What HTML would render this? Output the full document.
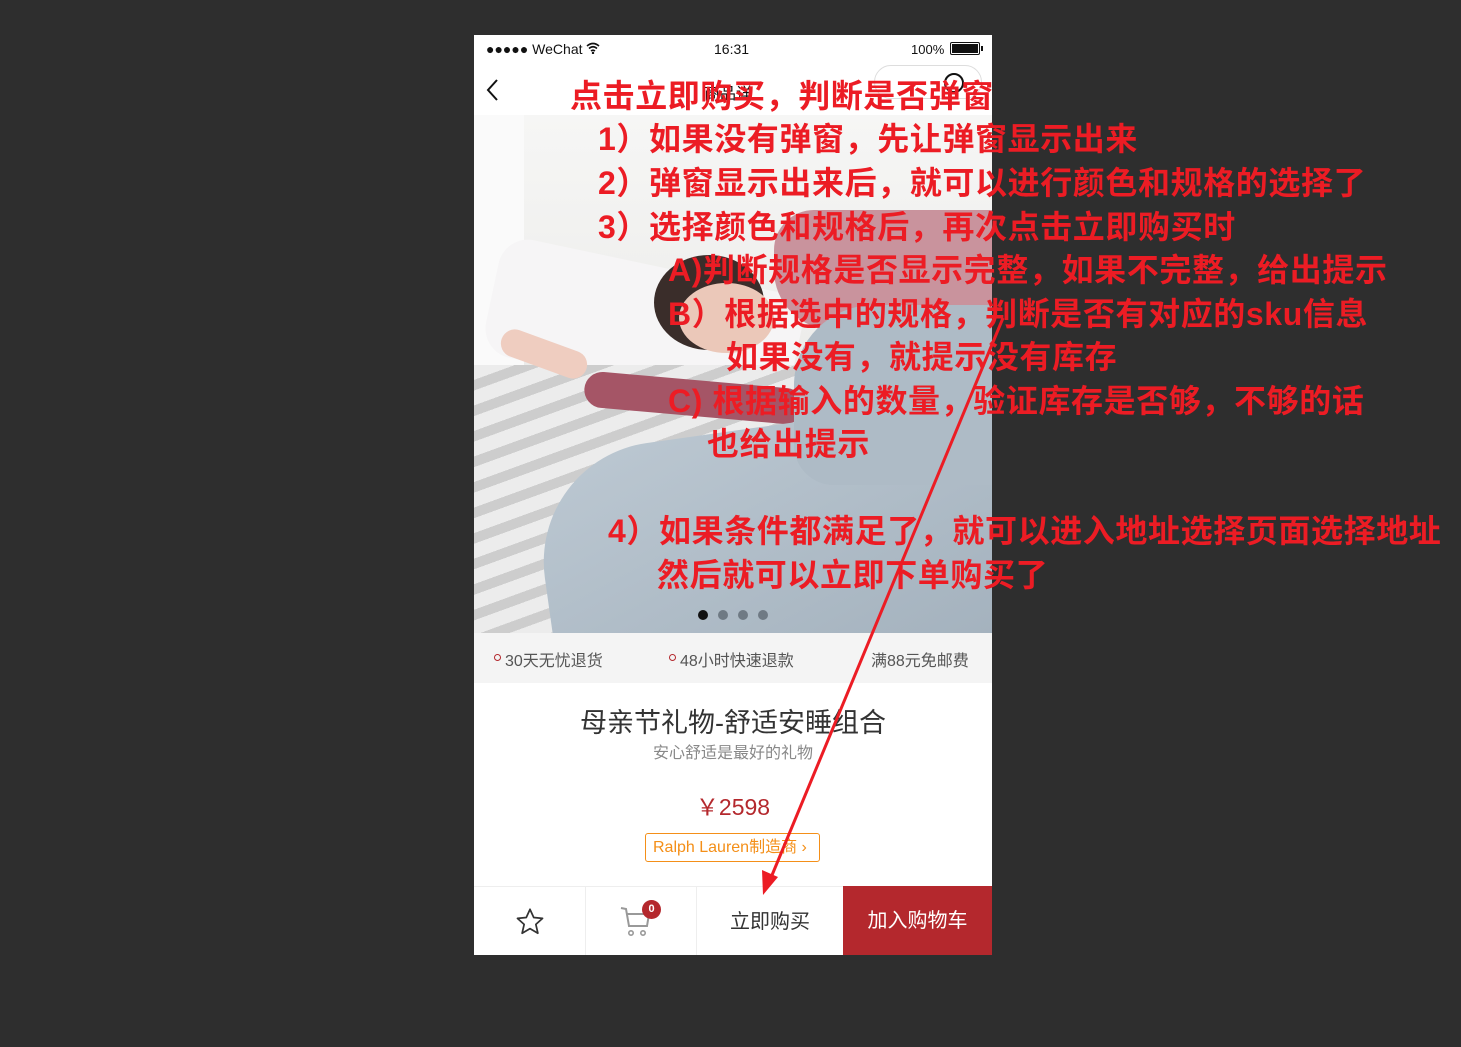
<!DOCTYPE html>
<html><head><meta charset="utf-8">
<style>
*{margin:0;padding:0;box-sizing:border-box}
body{width:1461px;height:1047px;background:#2e2e2e;position:relative;overflow:hidden;font-family:"Liberation Sans","Noto Sans CJK SC",sans-serif}
.ph{position:absolute;left:474px;top:35px;width:518px;height:920px;background:#fff;overflow:hidden}
.abs{position:absolute}
.ann{position:absolute;color:#ec1c24;font-weight:bold;font-size:32px;line-height:1;white-space:nowrap;font-family:"Liberation Sans","Noto Sans CJK SC",sans-serif;letter-spacing:0.6px}
</style></head><body>
<div class="ph">
  <div class="abs" style="left:12px;top:6px;font-size:14px;color:#111">●●●●● WeChat</div>
  <svg class="abs" style="left:112px;top:7px" width="14" height="12" viewBox="0 0 14 12"><path d="M1 4 Q7 -1 13 4 M3 6.5 Q7 3 11 6.5 M5 9 Q7 7.5 9 9" stroke="#111" stroke-width="1.6" fill="none"/><circle cx="7" cy="11" r="1.2" fill="#111"/></svg>
  <div class="abs" style="left:240px;top:6px;font-size:14px;color:#111">16:31</div>
  <div class="abs" style="left:437px;top:7px;font-size:13px;color:#111">100%</div>
  <div class="abs" style="left:476px;top:7px;width:30px;height:13px;border:1.5px solid #111;border-radius:2px;padding:1px"><div style="width:100%;height:100%;background:#111"></div></div>
  <div class="abs" style="left:507px;top:11px;width:2px;height:5px;background:#111"></div>
  <svg class="abs" style="left:12px;top:43px" width="14" height="24" viewBox="0 0 14 24"><path d="M11 2 L2 12 L11 22" stroke="#111" stroke-width="2" fill="none"/></svg>
  <div class="abs" style="left:230px;top:45px;font-size:16px;color:#111">商品详</div>
  <div class="abs" style="left:400px;top:30px;width:108px;height:34px;border:1px solid #ddd;border-radius:17px"></div>
  <div class="abs" style="left:470px;top:38px;width:20px;height:20px;border:2px solid #111;border-radius:50%"></div>
  <!-- image -->
  <div class="abs" style="left:0;top:80px;width:518px;height:518px;background:linear-gradient(180deg,#f6f6f5 0%,#eeeeec 40%,#d8d9da 100%);overflow:hidden">
    <div class="abs" style="left:0;top:0;width:50px;height:250px;background:#fafafa"></div>
    <div class="abs" style="left:15px;top:150px;width:310px;height:120px;background:#f6f5f6;border-radius:30px;transform:rotate(12deg)"></div>
    <div class="abs" style="left:0;top:250px;width:330px;height:270px;background:repeating-linear-gradient(160deg,#ececec 0 14px,#cdcdcd 14px 24px)"></div>
    <div class="abs" style="left:300px;top:95px;width:218px;height:120px;background:#c9939d;border-radius:40px 0 0 60px"></div>
    <div class="abs" style="left:180px;top:140px;width:110px;height:95px;background:#3a2d2a;border-radius:50%"></div>
    <div class="abs" style="left:205px;top:168px;width:95px;height:70px;background:#ebc8b9;border-radius:50%"></div>
    <div class="abs" style="left:110px;top:265px;width:220px;height:36px;background:#a55566;border-radius:18px;transform:rotate(5deg)"></div>
    <div class="abs" style="left:25px;top:225px;width:90px;height:28px;background:#efcdc0;border-radius:14px;transform:rotate(20deg)"></div>
    <div class="abs" style="left:70px;top:310px;width:480px;height:260px;background:linear-gradient(160deg,#bcc8d2,#a2b0bc);border-radius:120px 0 0 0;transform:rotate(-8deg)"></div>
    <div class="abs" style="left:320px;top:190px;width:210px;height:180px;background:#aebbc6;border-radius:80px 0 0 40px"></div>
    <div class="abs" style="left:224px;top:495px;width:10px;height:10px;border-radius:50%;background:#111"></div>
    <div class="abs" style="left:244px;top:495px;width:10px;height:10px;border-radius:50%;background:#6f7a84"></div>
    <div class="abs" style="left:264px;top:495px;width:10px;height:10px;border-radius:50%;background:#6f7a84"></div>
    <div class="abs" style="left:284px;top:495px;width:10px;height:10px;border-radius:50%;background:#6f7a84"></div>
  </div>
  <div class="abs" style="left:0;top:598px;width:518px;height:50px;background:#f4f4f4;font-size:16px;color:#555">
    <div class="abs" style="left:20px;top:21px;width:7px;height:7px;border:1.5px solid #b4282d;border-radius:50%"></div>
    <div class="abs" style="left:31px;top:14px">30天无忧退货</div>
    <div class="abs" style="left:195px;top:21px;width:7px;height:7px;border:1.5px solid #b4282d;border-radius:50%"></div>
    <div class="abs" style="left:206px;top:14px">48小时快速退款</div>
    <div class="abs" style="left:397px;top:14px">满88元免邮费</div>
  </div>
  <div class="abs" style="left:0;top:666px;width:518px;text-align:center;font-size:27px;color:#333">母亲节礼物-舒适安睡组合</div>
  <div class="abs" style="left:0;top:704px;width:518px;text-align:center;font-size:16px;color:#888">安心舒适是最好的礼物</div>
  <div class="abs" style="left:0;top:753px;width:518px;text-align:center;font-size:23px;color:#b4282d">￥2598</div>
  <div class="abs" style="left:171px;top:798px;width:175px;height:29px;border:1px solid #f48f18;border-radius:3px;color:#f48f18;font-size:16px;line-height:27px;padding-left:7px">Ralph Lauren制造商 ›</div>
  <div class="abs" style="left:0;top:851px;width:518px;height:69px;border-top:1px solid #eee">
    <svg class="abs" style="left:40px;top:19px" width="32" height="32" viewBox="0 0 24 24"><path d="M12 2.5 L14.8 8.6 L21.4 9.3 L16.4 13.8 L17.9 20.4 L12 17 L6.1 20.4 L7.6 13.8 L2.6 9.3 L9.2 8.6 Z" stroke="#333" stroke-width="1.3" fill="none" stroke-linejoin="round"/></svg>
    <div class="abs" style="left:111px;top:0;width:1px;height:69px;background:#eee"></div>
    <svg class="abs" style="left:144px;top:17px" width="34" height="34" viewBox="0 0 34 34"><path d="M3 4 L8 5 L11 22 L29 22 L31 10 L9 10" stroke="#999" stroke-width="2" fill="none"/><circle cx="13" cy="29" r="2.2" stroke="#999" stroke-width="1.6" fill="none"/><circle cx="25" cy="29" r="2.2" stroke="#999" stroke-width="1.6" fill="none"/></svg>
    <div class="abs" style="left:168px;top:13px;width:19px;height:19px;border-radius:50%;background:#b4282d;color:#fff;font-size:11px;font-weight:bold;text-align:center;line-height:19px">0</div>
    <div class="abs" style="left:222px;top:0;width:1px;height:69px;background:#eee"></div>
    <div class="abs" style="left:223px;top:18px;width:146px;text-align:center;font-size:20px;color:#333">立即购买</div>
    <div class="abs" style="left:369px;top:-1px;width:149px;height:70px;background:#b4282d;color:#fff;font-size:20px;text-align:center;line-height:70px">加入购物车</div>
  </div>
</div>
<div class="ann" style="left:570px;top:80px">点击立即购买，判断是否弹窗</div>
<div class="ann" style="left:598px;top:123px">1）如果没有弹窗，先让弹窗显示出来</div>
<div class="ann" style="left:598px;top:167px">2）弹窗显示出来后，就可以进行颜色和规格的选择了</div>
<div class="ann" style="left:598px;top:211px">3）选择颜色和规格后，再次点击立即购买时</div>
<div class="ann" style="left:668px;top:254px">A)判断规格是否显示完整，如果不完整，给出提示</div>
<div class="ann" style="left:668px;top:298px">B）根据选中的规格，判断是否有对应的sku信息</div>
<div class="ann" style="left:726px;top:341px">如果没有，就提示没有库存</div>
<div class="ann" style="left:668px;top:385px">C) 根据输入的数量，验证库存是否够，不够的话</div>
<div class="ann" style="left:707px;top:428px">也给出提示</div>
<div class="ann" style="left:608px;top:515px">4）如果条件都满足了，就可以进入地址选择页面选择地址</div>
<div class="ann" style="left:657px;top:559px">然后就可以立即下单购买了</div>
<svg class="abs" style="left:0;top:0" width="1461" height="1047"><line x1="1003" y1="318" x2="770" y2="880" stroke="#ec1c24" stroke-width="3"/><path d="M763 895 L762 870 L778 877 Z" fill="#ec1c24"/></svg>
</body></html>
